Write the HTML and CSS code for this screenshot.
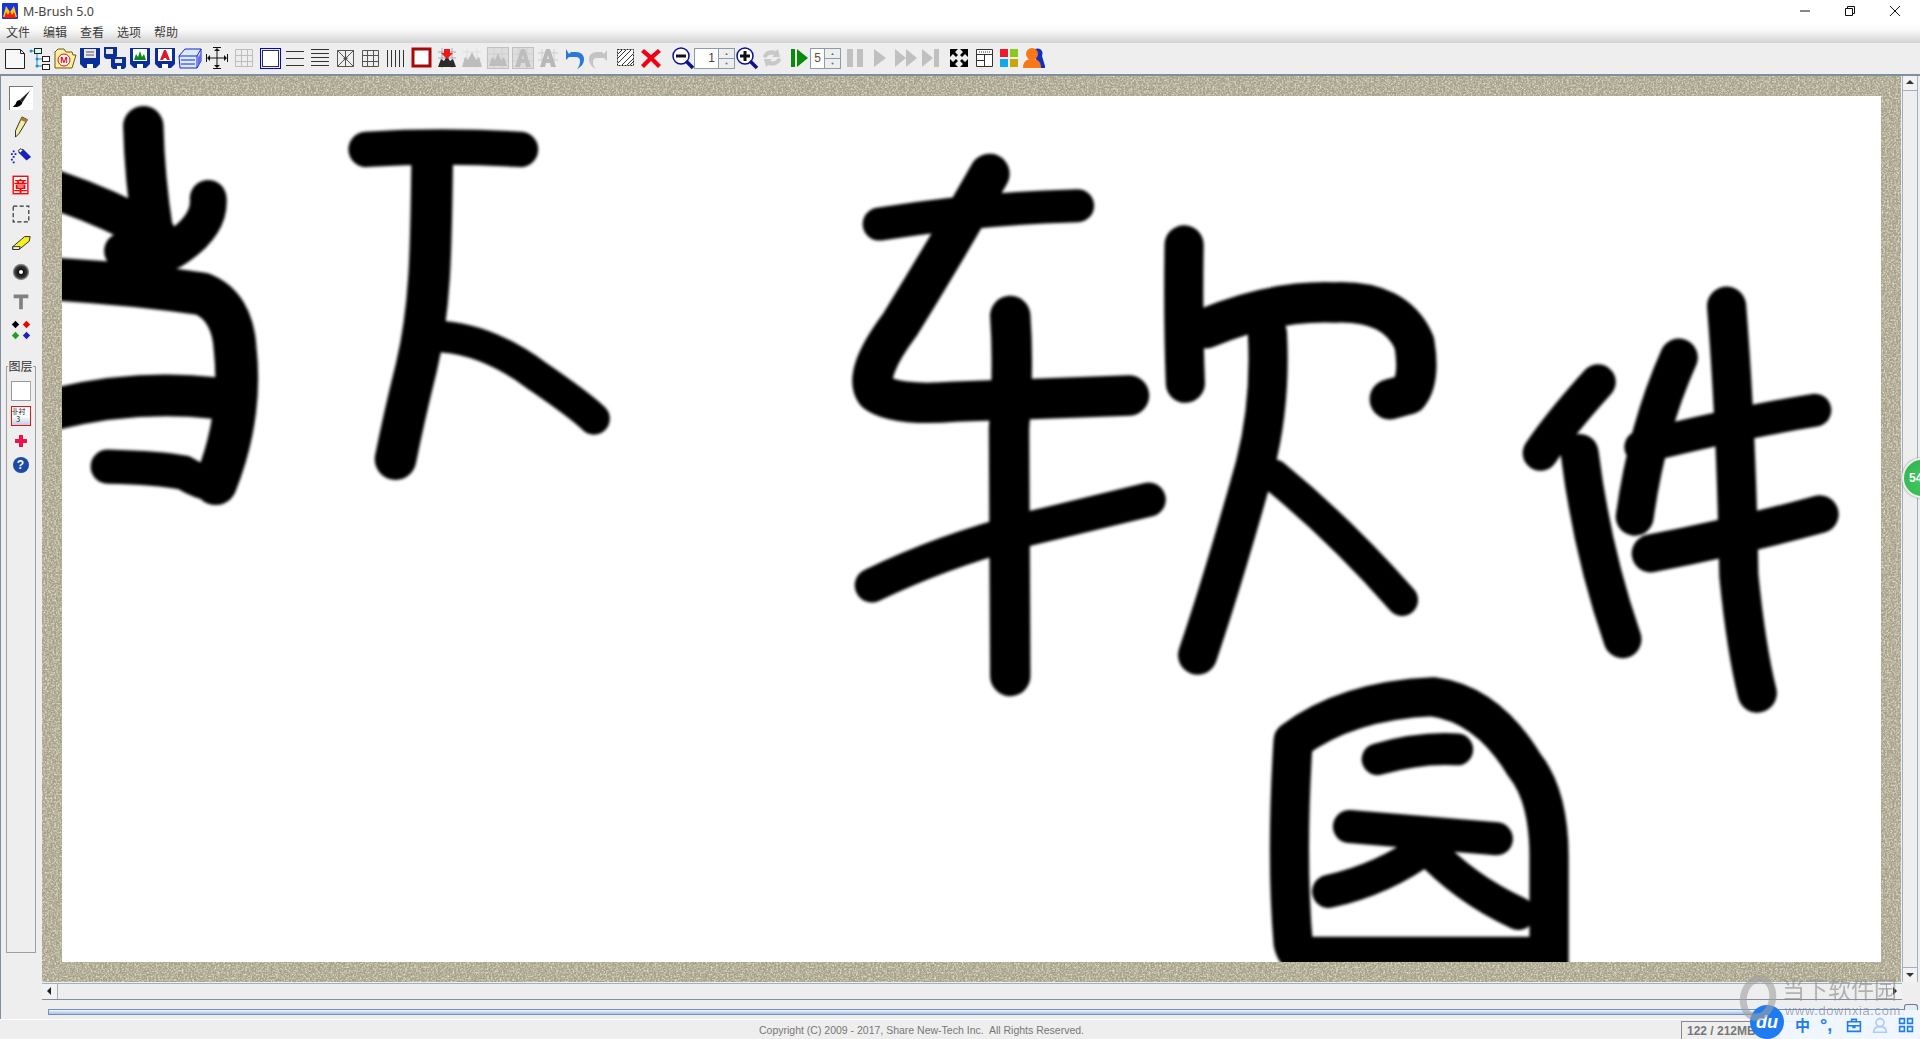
FILE: index.html
```html
<!DOCTYPE html>
<html lang="zh">
<head>
<meta charset="utf-8">
<title>M-Brush 5.0</title>
<link rel="stylesheet" href="styles.css">
</head>
<body>
<svg class="defs" width="0" height="0">
  <defs>
    <symbol id="disk" viewBox="0 0 24 24"><path d="M2 2h20v16l-4 4H6l-4-4z" fill="#0a2f96"/><rect x="9" y="18" width="6" height="4" fill="#fff"/></symbol>
    <radialGradient id="halo"><stop offset="0.25" stop-color="#111"/><stop offset="0.7" stop-color="#333"/><stop offset="1" stop-color="#aaa"/></radialGradient>
    <filter id="soft" x="-5%" y="-5%" width="110%" height="110%"><feGaussianBlur stdDeviation="1.1"/></filter>
    <filter id="grain" x="0" y="0" width="100%" height="100%">
      <feTurbulence type="fractalNoise" baseFrequency="0.55" numOctaves="2" seed="4"/>
      <feColorMatrix values="0 0 0 0 0.80  0 0 0 0 0.78  0 0 0 0 0.67  2.2 0 0 0 -0.90"/>
    </filter>
    <filter id="grain2" x="0" y="0" width="100%" height="100%">
      <feTurbulence type="fractalNoise" baseFrequency="0.6" numOctaves="2" seed="11"/>
      <feColorMatrix values="0 0 0 0 0.42  0 0 0 0 0.40  0 0 0 0 0.30  0 3 0 0 -1.20"/>
    </filter>
    <pattern id="ticks" width="20" height="20" patternUnits="userSpaceOnUse"><path d="M6 2v9M15 9v8" stroke="#d6d2bd" stroke-width="1" opacity=".45"/></pattern>
  </defs>
</svg>

<header class="titlebar">
  <svg class="app-logo" viewBox="0 0 16 16"><rect width="16" height="16" rx="1" fill="#1434e0"/><path d="M1 14L4 3l4 6 4-6 3 11z" fill="#f8cc10"/><path d="M2 15l2-6 2 3 2-4 2 4 2-3 2 6z" fill="#f02010"/></svg>
  <span class="app-name">M-Brush 5.0</span>
  <div class="winctl">
    <svg viewBox="0 0 12 12"><path d="M1 6h10" stroke="#111" fill="none"/></svg>
    <svg viewBox="0 0 12 12"><path d="M1.500 3.500h7v7h-7zM3.500 3.500v-2h7v7h-2" stroke="#111" fill="none"/></svg>
    <svg viewBox="0 0 12 12"><path d="M1 1l10 10M11 1L1 11" stroke="#111" fill="none"/></svg>
  </div>
</header>

<nav class="menubar"><span>文件</span><span>编辑</span><span>查看</span><span>选项</span><span>帮助</span></nav>

<div class="toolbar">
  <svg class="ti" viewBox="0 0 24 24"><path d="M2.500 3.500h15l4 4v15h-19z" fill="#f8f8f8" stroke="#222"/><path d="M17.500 3.500v4h4" fill="none" stroke="#222"/></svg>
  <svg class="ti" viewBox="0 0 24 24"><g fill="#fff" stroke="#222"><rect x="6.500" y="2.500" width="7" height="5" fill="#cfe"/><rect x="14.500" y="10.500" width="7" height="5"/><rect x="14.500" y="18.500" width="7" height="5"/></g><path d="M2 5h4M9 8v12M9 13h5M9 20h5" stroke="#1a90d8" fill="none"/><g fill="#1a90d8"><circle cx="3" cy="5" r="1.500"/><circle cx="9" cy="13" r="1.500"/><circle cx="9" cy="20" r="1.500"/></g></svg>
  <svg class="ti" viewBox="0 0 24 24"><path d="M2 22V6l3-3h6l2 3h6l1 3h3l-4 13z" fill="#fff0a0" stroke="#6a5a10"/><circle cx="11" cy="14" r="6" fill="#fff" stroke="#e01010"/><text class="ic-txt red" x="11" y="17">M</text></svg>
  <svg class="ti" viewBox="0 0 24 24"><use href="#disk"/><rect x="6" y="3" width="12" height="9" fill="#e8e8e8"/><path d="M8 6h8M8 9h8" stroke="#556"/></svg>
  <svg class="ti" viewBox="0 0 24 24"><path d="M1 1h13v9l-2 3H3l-2-2z" fill="#0a2f96"/><rect x="3" y="3" width="7" height="5" fill="#e8e8e8"/><path d="M8 11h15v10l-2 2H10l-2-2z" fill="#0a2f96"/><rect x="12" y="13" width="7" height="4" fill="#e8e8e8"/><rect x="14" y="20" width="4" height="3" fill="#fff"/></svg>
  <svg class="ti" viewBox="0 0 24 24"><use href="#disk"/><rect x="5" y="3" width="14" height="12" fill="#fff"/><path d="M6 14l2-6 2 3 2-6 2 6 2-3 2 6z" fill="#0a8a1a"/></svg>
  <svg class="ti" viewBox="0 0 24 24"><use href="#disk"/><rect x="5" y="3" width="14" height="12" fill="#fff"/><path d="M7 14l4-10h2l4 10h-3l-1-2h-2l-1 2z" fill="#e0182a"/></svg>
  <svg class="ti" viewBox="0 0 24 24"><path d="M1 10l6-7h16v12l-4 7H2z" fill="#dcecff" stroke="#1420e0"/><path d="M1 10h18v12M19 10l4-7M3 14h14M3 18h14" stroke="#1420e0" fill="none"/><path d="M20 11l3-4v8l-3 5z" fill="#6a70d8"/></svg>
  <svg class="ti m2" viewBox="0 0 24 24"><path d="M12 3v18M3 12h18" stroke="#111" fill="none"/><path d="M9 5h6l-3-3zM9 19h6l-3 3zM5 9v6l-3-3zM19 9v6l3-3z" fill="#111"/><path d="M1.500 8v8M22.500 8v8M8 1.500h8M8 22.500h8" stroke="#111"/></svg>
  <svg class="ti m2" viewBox="0 0 24 24"><path d="M3.500 3.500h17v17h-17zM3.500 9.500h17M3.500 15.500h17M9.500 3.500v17M15.500 3.500v17" fill="none" stroke="#bdbdbd"/></svg>
  <span class="sel"><svg viewBox="0 0 17 17"><rect x=".5" y=".5" width="16" height="16" fill="#fff" stroke="#333"/></svg></span>
  <svg class="ti m1" viewBox="0 0 24 24"><path d="M3 5.500h18M3 12.500h18M3 19.500h18" fill="none" stroke="#333"/></svg>
  <svg class="ti" viewBox="0 0 24 24"><path d="M3 3.500h18M3 7.500h18M3 11.500h18M3 15.500h18M3 19.500h18" fill="none" stroke="#333"/></svg>
  <svg class="ti" viewBox="0 0 24 24"><path d="M4.500 4.500h16v16h-16zM4.500 4.500l16 16M20.500 4.500l-16 16M12.500 4.500v16" fill="none" stroke="#555"/><circle cx="12.500" cy="12.500" r="2" fill="#555"/></svg>
  <svg class="ti" viewBox="0 0 24 24"><path d="M4.500 4.500h16v16h-16zM4.500 9.500h16M4.500 15.500h16M9.500 4.500v16M15.500 4.500v16" fill="none" stroke="#555"/></svg>
  <svg class="ti" viewBox="0 0 24 24"><path d="M4.500 4v17M8.500 4v17M12.500 4v17M16.500 4v17M20.500 4v17" fill="none" stroke="#333"/></svg>
  <svg class="ti m2" viewBox="0 0 24 24"><rect x="3" y="3" width="17" height="17" fill="#fff" stroke="#a80808" stroke-width="3"/></svg>
  <svg class="ti" viewBox="0 0 24 24"><path d="M3 6h18M3 12h18M7 2v20M17 2v20" stroke="#aaa" fill="none"/><path d="M3 21l3-8 3 2 3-5 3 5 3-2 3 8z" fill="#2a2a2a"/><path d="M9 3h6v4h3l-6 6-6-6h3z" fill="#f01818"/></svg>
  <svg class="ti" viewBox="0 0 24 24"><path d="M3 6h18M3 12h18M7 2v20M17 2v20" stroke="#ddd" fill="none"/><path d="M2 21l3-10 3 3 4-8 4 8 3-3 3 10z" fill="#bdbdbd"/></svg>
  <svg class="ti m1" viewBox="0 0 24 24"><rect x="1.500" y="1.500" width="21" height="21" fill="#ddd" stroke="#c0c0c0"/><path d="M2 8h20M2 15h20M8 2v20M16 2v20" stroke="#cfcfcf" fill="none"/><path d="M3 20l3-9 3 3 3-7 3 7 3-3 3 9z" fill="#bdbdbd"/></svg>
  <svg class="ti" viewBox="0 0 24 24"><rect x="1.500" y="1.500" width="21" height="21" fill="#ddd" stroke="#c0c0c0"/><path d="M2 8h20M2 15h20M8 2v20M16 2v20" stroke="#cfcfcf" fill="none"/><path fill-rule="evenodd" d="M4 21l6-18h4l6 18h-5l-1-4h-4l-1 4zM11 13h2l-1-4z" fill="#bdbdbd"/></svg>
  <svg class="ti" viewBox="0 0 24 24"><path d="M2 7h20M2 14h20M6 3v18M18 3v18" stroke="#ccc" fill="none"/><path fill-rule="evenodd" d="M4 21l6-18h4l6 18h-5l-1-4h-4l-1 4zM11 13h2l-1-4z" fill="#b8b8b8"/></svg>
  <svg class="ti m1" viewBox="0 0 24 24"><path d="M4 3v11l3-3h7c3 0 4 2 4 4 0 3-1 6-3 8 4-2 7-5 7-10 0-4-3-7-8-7H9L7 8z" fill="#2a78d8"/></svg>
  <svg class="ti" viewBox="0 0 24 24"><path d="M20 4v11l-3-3h-7c-3 0-4 2-4 4 0 3 1 5 3 7-4-2-7-5-7-10 0-4 3-7 8-7h5l2 2z" fill="#c4c4c4"/></svg>
  <svg class="ti m2" viewBox="0 0 24 24"><rect x="3.500" y="3.500" width="16" height="16" fill="#fff" stroke="#222" stroke-dasharray="2 1"/><path d="M4 12l8-8M4 17l13-13M8 19L19 8M13 19l6-6M4 8l4-4M16 19l3-3" stroke="#333" fill="none"/></svg>
  <svg class="ti" viewBox="0 0 24 24"><path d="M5 3l7 6 7-6 3 3-7 6 7 7-3 3-7-7-7 7-3-3 7-7-7-6z" fill="#f00010"/></svg>
  <svg class="ti m7" viewBox="0 0 24 24"><circle cx="10" cy="10" r="8" fill="#fff" stroke="#10108a" stroke-width="1.500"/><path d="M5 10h10" stroke="#111" stroke-width="3"/><path d="M15 15l7 7" stroke="#10108a" stroke-width="3.500"/></svg>
  <div class="spin"><span class="spin-val">1</span><span class="spin-btns"><i>▲</i><i>▼</i></span></div>
  <svg class="ti zoom-in" viewBox="0 0 24 24"><circle cx="10" cy="10" r="8" fill="#fff" stroke="#10108a" stroke-width="1.500"/><path d="M5 10h10M10 5v10" stroke="#111" stroke-width="3"/><path d="M15 15l7 7" stroke="#10108a" stroke-width="3.500"/></svg>
  <svg class="ti" viewBox="0 0 24 24"><path d="M3 11c1-5 6-8 13-6l2-2 2 8h-8l2-2c-4-1-6 0-8 3zM21 13c-1 5-6 8-13 6l-2 2-2-8h8l-2 2c4 1 6 0 8-3z" fill="#c8c8c8"/></svg>
  <svg class="ti m2" viewBox="0 0 24 24"><path d="M4 3h4v18H4zM10 3l11 9-11 9z" fill="#0a8a0a"/></svg>
  <div class="spin narrow"><span class="spin-val orange">5</span><span class="spin-btns"><i>▲</i><i>▼</i></span></div>
  <svg class="ti m2" viewBox="0 0 24 24"><path d="M3 3h6v18H3zM13 3h6v18h-6z" fill="#c0c0c0"/></svg>
  <svg class="ti" viewBox="0 0 24 24"><path d="M5 3l12 9-12 9z" fill="#c0c0c0"/></svg>
  <svg class="ti" viewBox="0 0 24 24"><path d="M1 3l11 9-11 9zM12 3l11 9-11 9z" fill="#c0c0c0"/></svg>
  <svg class="ti" viewBox="0 0 24 24"><path d="M3 3l11 9-11 9zM15 3h5v18h-5z" fill="#c0c0c0"/></svg>
  <svg class="ti m3" viewBox="0 0 24 24"><path d="M3 3h8l-3 3 3 3-2 2-3-3-3 3zM21 3h-8l3 3-3 3 2 2 3-3 3 3zM3 21h8l-3-3 3-3-2-2-3 3-3-3zM21 21h-8l3-3-3-3 2-2 3 3 3-3z" fill="#000"/></svg>
  <svg class="ti" viewBox="0 0 24 24"><path d="M4.500 3.500h16v17h-16zM4.500 8.500h16M12.500 8.500v12M4.500 14.500h8" fill="#fff" stroke="#333"/><path d="M7 6h11" stroke="#333" stroke-dasharray="1 1"/></svg>
  <svg class="ti" viewBox="0 0 24 24"><rect x="3" y="3" width="8" height="8" fill="#f01830"/><rect x="13" y="3" width="8" height="8" fill="#88c820"/><rect x="3" y="13" width="8" height="8" fill="#10a8f0"/><rect x="13" y="13" width="8" height="8" fill="#c8a808"/></svg>
  <svg class="ti" viewBox="0 0 24 24"><path d="M13 3c5-2 9 2 7 7l3 10v2h-6l-3-9z" fill="#1030c0"/><circle cx="10" cy="8" r="6" fill="#f87818"/><path d="M1 22c0-6 3-9 9-9s9 3 9 9z" fill="#f87818"/></svg>
</div>

<main class="workspace">
  <aside class="sidebar">
    <div class="tools">
      <span class="tool active"><svg viewBox="0 0 24 24"><path d="M22 2L10 13l3 3z" fill="#222"/><path d="M10 13c-4 0-4 4-5 5l-3 3c5 1 10-1 11-5z" fill="#000"/></svg></span>
      <span class="tool"><svg viewBox="0 0 24 24"><path d="M13 1l6 3-9 15-4 4 0-7z" fill="#f4eca0" stroke="#222"/><path d="M13 1l6 3-1 3-7-3z" fill="#a08030"/></svg></span>
      <span class="tool"><svg viewBox="0 0 24 24"><path d="M9 8l5-4 9 9-5 4z" fill="#1420c8"/><path d="M9 6l3-2 2 2-3 3z" fill="#fff" stroke="#222"/><path d="M3 7h3M1 10h3M3 13h3M1 16h3M3 19h3M5 10h2" stroke="#1420c8" stroke-width="2" stroke-dasharray="2 1"/></svg></span>
      <span class="tool"><svg viewBox="0 0 24 24"><rect x="3.500" y="2.500" width="16" height="19" fill="#fff" stroke="#f00" stroke-width="1.500"/><text class="ic-stamp" x="11.500" y="18">章</text></svg></span>
      <span class="tool"><svg viewBox="0 0 24 24"><rect x="3.500" y="3.500" width="17" height="17" fill="none" stroke="#333" stroke-width="1.300" stroke-dasharray="4.500 2.500"/></svg></span>
      <span class="tool"><svg viewBox="0 0 24 24"><path d="M3 16L16 5h6l-1 5-11 9H3z" fill="#f4f020" stroke="#222"/><path d="M3 16h8l-1 3H3z" fill="#fff" stroke="#222"/></svg></span>
      <span class="tool"><svg viewBox="0 0 24 24"><circle cx="12" cy="12" r="9" fill="url(#halo)"/><circle cx="12" cy="12" r="2.200" fill="#fff"/></svg></span>
      <span class="tool"><svg viewBox="0 0 24 24"><path d="M4 5h16v4h-6v12h-4V9H4z" fill="#808080"/></svg></span>
      <span class="tool"><svg viewBox="0 0 24 24"><path d="M6 2l4 4-4 4-4-4z" fill="#000"/><path d="M18 2l4 4-4 4-4-4z" fill="#f00000"/><path d="M6 14l4 4-4 4-4-4z" fill="#20a020"/><path d="M18 14l4 4-4 4-4-4z" fill="#2020c0"/></svg></span>
    </div>
    <fieldset class="layers">
      <legend>图层</legend>
      <span class="layer-blank"></span>
      <span class="layer-thumb">卝衬<br>&nbsp;&nbsp;&nbsp;3</span>
      <svg class="layer-ic" viewBox="0 0 16 16"><path d="M6 2h4v4h4v4h-4v4H6v-4H2V6h4z" fill="#f0104a"/></svg>
      <span class="help">?</span>
    </fieldset>
  </aside>

  <div class="board">
    <div class="board-top">
      <div class="frame">
        <svg class="texture" width="100%" height="100%"><rect width="100%" height="100%" fill="#a49e85"/><rect width="100%" height="100%" filter="url(#grain2)"/><rect width="100%" height="100%" filter="url(#grain)"/><rect width="100%" height="100%" fill="url(#ticks)"/></svg>
        <div class="paper">
          <svg class="ink" viewBox="50.600 78.400 1485.500 707.200" preserveAspectRatio="none">
            <g fill="none" stroke="#000" stroke-linecap="round" stroke-linejoin="round" filter="url(#soft)">
              <path d="M117 103Q118 145 125 190" stroke-width="33"/>
              <path d="M45 155Q90 170 128 192" stroke-width="32"/>
              <path d="M170 162Q172 185 140 205Q118 212 100 205" stroke-width="30"/>
              <path d="M45 228Q110 232 165 240Q190 250 192 285Q198 340 176 395" stroke-width="35"/>
              <path d="M45 334Q110 318 175 325" stroke-width="34"/>
              <path d="M88 381Q130 382 150 386Q165 395 176 396" stroke-width="28"/>
              <path d="M299 122Q360 118 425 122" stroke-width="29"/>
              <path d="M353 125C352 200 352 250 340 300Q330 340 323 375" stroke-width="34"/>
              <path d="M362 275Q400 278 440 308Q475 332 485 342" stroke-width="26"/>
              <path d="M718 183Q800 170 880 168" stroke-width="27"/>
              <path d="M808 142Q775 200 735 265Q705 305 715 320Q730 332 780 328L922 323" stroke-width="33"/>
              <path d="M825 258Q828 300 824 350L825 552" stroke-width="33"/>
              <path d="M712 478Q780 445 860 427L938 408" stroke-width="28"/>
              <path d="M967 200Q966 260 968 313" stroke-width="32"/>
              <path d="M985 268Q1040 245 1090 247Q1140 245 1155 280Q1160 310 1150 322L1135 326" stroke-width="33"/>
              <path d="M1035 272Q1038 330 1025 380Q1000 470 978 535" stroke-width="32"/>
              <path d="M1040 388Q1095 433 1145 490" stroke-width="26"/>
              <path d="M1305 312Q1275 345 1258 370" stroke-width="29"/>
              <path d="M1290 370Q1300 450 1325 522" stroke-width="31"/>
              <path d="M1371 292Q1345 350 1335 422" stroke-width="31"/>
              <path d="M1340 365Q1420 345 1482 335" stroke-width="27"/>
              <path d="M1348 452Q1420 438 1486 420" stroke-width="31"/>
              <path d="M1410 250Q1418 350 1420 470Q1426 530 1435 566" stroke-width="32"/>
              <path d="M1066 780Q1058 780 1056 770Q1050 700 1056 605Q1100 572 1170 569Q1215 575 1245 625Q1265 650 1265 700V790" stroke-width="32"/>
              <path d="M1070 776H1265" stroke-width="22"/>
              <path d="M1125 620Q1160 610 1190 612" stroke-width="26"/>
              <path d="M1102 675Q1160 680 1222 685" stroke-width="27"/>
              <path d="M1085 728Q1130 718 1165 692Q1195 725 1240 746" stroke-width="27"/>
            </g>
          </svg>
        </div>
      </div>
      <div class="vscroll"><span class="sbtn up"></span><span class="strack"></span><span class="sbtn down"></span></div>
    </div>
    <div class="hscroll"><span class="hbtn left"></span><span class="htrack"></span><span class="hbtn right"></span></div>
    <div class="progress-row"><div class="progress"></div><span class="progress-end"></span></div>
  </div>
</main>

<footer class="statusbar">
  <span class="copyright">Copyright (C) 2009 - 2017, Share New-Tech Inc.&nbsp; All Rights Reserved.</span>
  <span class="memory">122 / 212MB</span>
</footer>

<div class="badge">54</div>

<div class="ime">
  <span class="ime-du">du</span>
  <span class="ime-zh">中</span>
  <span class="ime-punc">°,</span>
  <svg viewBox="0 0 20 20"><path d="M2 6h16v12H2zM7 6V3h6v3M2 11h16M9 11v2h2v-2" fill="none" stroke="#1f7cf0" stroke-width="2"/></svg>
  <svg viewBox="0 0 20 20"><circle cx="10" cy="7" r="5" fill="none" stroke="#a9cbf6" stroke-width="2"/><path d="M2 19c0-5 3-7 8-7s8 2 8 7z" fill="none" stroke="#a9cbf6" stroke-width="2"/></svg>
  <svg viewBox="0 0 20 20"><path d="M2 2h6v6H2zM12 2h6v6h-6zM2 12h6v6H2zM12 12h6v6h-6z" fill="none" stroke="#1f7cf0" stroke-width="2"/></svg>
</div>

<div class="watermark">
  <span class="wm-ring"></span>
  <span class="wm-title">当下软件园</span>
  <span class="wm-url">www.downxia.com</span>
</div>
</body>
</html>
```

FILE: styles.css
```css
* { box-sizing: border-box; }
html, body { margin: 0; height: 100%; }
body {
  width: 1920px;
  height: 1039px;
  overflow: hidden;
  position: relative;
  background: #eeeeee;
  font-family: "Noto Sans", "Noto Sans CJK SC", sans-serif;
  color: #333;
  display: flex;
  flex-direction: column;
}
.defs { position: absolute; }

.titlebar {
  height: 22px;
  background: #fff;
  display: flex;
  align-items: center;
  padding-left: 2px;
  flex: none;
}
.app-logo { width: 16px; height: 16px; }
.app-name { margin-left: 5px; font-size: 12.5px; color: #444; }
.winctl { margin-left: auto; display: flex; gap: 33px; padding-right: 19px; }
.winctl svg { width: 12px; height: 12px; }

.menubar {
  height: 21px;
  flex: none;
  display: flex;
  gap: 13px;
  padding-left: 6px;
  align-items: flex-start;
  font-size: 12px;
  line-height: 20px;
  font-family: "Noto Sans CJK SC", sans-serif;
  color: #3a3a3a;
  background: linear-gradient(#ffffff 0, #fbfbfb 35%, #d2d2d2 100%);
}

.toolbar {
  height: 33px;
  flex: none;
  display: flex;
  align-items: center;
  gap: 1px;
  padding: 0 0 1px 3px;
  background: #eeeeee;
  border-bottom: 2px solid #7f8fa1;
}
.ti { width: 24px; height: 24px; flex: none; }
.ic-txt { font: bold 9px "Liberation Sans", sans-serif; text-anchor: middle; }
.ic-txt.red { fill: #e01010; }
.ic-stamp { font: bold 15px "Noto Sans CJK SC", sans-serif; text-anchor: middle; fill: #f00; }
.m1 { margin-left: 1px; }
.m2 { margin-left: 2px; }
.m3 { margin-left: 3px; }
.m7 { margin-left: 7px; }
.zoom-in { margin-left: -1px; }
.sel {
  width: 21px;
  height: 21px;
  margin-left: 3px;
  border: 1px solid #0000f0;
  padding: 1px;
  flex: none;
  display: flex;
}
.sel svg { width: 17px; height: 17px; }
.spin {
  width: 41px;
  height: 21px;
  margin-left: -2px;
  display: flex;
  flex: none;
  background: #fff;
  border: 1px solid #8b9cae;
  font-family: "Liberation Sans", sans-serif;
}
.spin.narrow { width: 31px; margin-left: -2px; }
.spin-val { flex: 1; text-align: right; padding-right: 3px; font-size: 12px; line-height: 19px; color: #444; }
.spin-val.orange { color: #6a4a30; }
.spin-btns { width: 16px; flex: none; display: flex; flex-direction: column; background: #eee; border-left: 1px solid #8b9cae; }
.spin-btns i { flex: 1; font-style: normal; font-size: 4px; line-height: 9px; text-align: center; color: #666; }
.spin-btns i + i { border-top: 1px solid #8b9cae; }

.workspace { height: 943px; flex: none; display: flex; }

.sidebar {
  width: 42px;
  flex: none;
  border-left: 1px solid #7f8fa1;
  border-right: 1px solid transparent;
  display: flex;
  flex-direction: column;
  align-items: center;
  padding: 10px 5px 0 4px;
}
.tools { display: flex; flex-direction: column; gap: 5px; align-items: center; }
.tool { width: 24px; height: 24px; display: flex; }
.tool svg { width: 22px; height: 22px; margin: 1px; }
.tool.active { background: #fff; border-top: 1px solid #777; border-left: 1px solid #777; }
.layers {
  width: 30px;
  height: 594px;
  margin: 17px 0 0;
  padding: 0;
  border: 1px solid #a0a0a0;
  display: flex;
  flex-direction: column;
  align-items: center;
  gap: 5px;
}
.layers legend { font-size: 12px; padding: 0; line-height: 14px; font-family: "Noto Sans CJK SC", sans-serif; margin: 0 auto; }
.layer-blank { width: 20px; height: 20px; margin-top: 8px; background: #fff; border: 1px solid #999; border-right-color: #aaa; flex: none; }
.layer-thumb {
  width: 20px;
  height: 20px;
  flex: none;
  overflow: hidden;
  border: 1px solid #f01010;
  background: linear-gradient(#fff 50%, #b8d0e8);
  font-size: 7px;
  line-height: 8px;
  color: #111;
  font-family: "Noto Sans CJK SC", sans-serif;
}
.layer-ic { width: 16px; height: 16px; margin-top: 2px; flex: none; }
.help {
  width: 16px;
  height: 16px;
  margin-top: 3px;
  flex: none;
  border-radius: 50%;
  background: #1c4aa8;
  color: #fff;
  font: bold 12px/16px "Liberation Sans", sans-serif;
  text-align: center;
}

.board { flex: 1; min-width: 0; display: flex; flex-direction: column; }
.board-top { height: 906px; display: flex; flex: none; }
.frame { width: 1859px; height: 906px; position: relative; padding: 20px; flex: none; overflow: hidden; }
.texture { position: absolute; inset: 0; }
.paper { position: relative; width: 1819px; height: 866px; background: #fff; overflow: hidden; }
.ink { display: block; width: 100%; height: 100%; }

.vscroll {
  width: 16px;
  margin-left: 1px;
  display: flex;
  flex-direction: column;
  border-left: 1px solid #9fb0c4;
  border-right: 1px solid #9fb0c4;
}
.strack { flex: 1; background: #eee; }
.sbtn { height: 15px; background: #f2f2f2; position: relative; flex: none; }
.sbtn::after { content: ""; position: absolute; left: 3px; border-left: 4px solid transparent; border-right: 4px solid transparent; }
.sbtn.up { border-bottom: 1px solid #9fb0c4; }
.sbtn.up::after { top: 4px; border-bottom: 4px solid #333; }
.sbtn.down { border-top: 1px solid #9fb0c4; }
.sbtn.down::after { top: 5px; border-top: 4px solid #333; }

.hscroll {
  height: 17px;
  width: 1860px;
  flex: none;
  display: flex;
  border-top: 1px solid #9fb0c4;
  border-bottom: 1px solid #7f8fa1;
  margin-top: 1px;
}
.htrack { flex: 1; background: #eee; }
.hbtn { width: 16px; position: relative; background: #f2f2f2; flex: none; }
.hbtn.left { border-right: 1px solid #9fb0c4; }
.hbtn.right { border-left: 1px solid #9fb0c4; }
.hbtn::after { content: ""; position: absolute; top: 3px; border-top: 4px solid transparent; border-bottom: 4px solid transparent; }
.hbtn.left::after { left: 5px; border-right: 4px solid #222; }
.hbtn.right::after { left: 6px; border-left: 4px solid #222; }

.progress-row { display: flex; padding: 9px 2px 0 6px; align-items: flex-start; }
.progress {
  flex: 1;
  height: 6px;
  border: 1px solid #6f8fca;
  background: linear-gradient(#f2f6fb, #a9c0dc);
}
.progress-end { width: 14px; height: 7px; margin-top: -5px; border: 1px solid #778; border-bottom: none; border-radius: 3px 3px 0 0; background: #e4ecf6; flex: none; }

.statusbar {
  flex: 1;
  position: relative;
  display: flex;
  border-top: 1px solid #fff;
}
.copyright {
  width: 1843px;
  text-align: center;
  font: 10.500px/20px "Liberation Sans", sans-serif;
  color: #777;
}
.memory {
  position: absolute;
  left: 1681px;
  top: 1px;
  width: 120px;
  height: 19px;
  padding-left: 5px;
  border: 1px solid #8a8a8a;
  border-bottom: none;
  border-right: none;
  font: bold 12px/18px "Liberation Sans", sans-serif;
  color: #777;
}

.badge {
  position: absolute;
  left: 1902px;
  top: 458px;
  width: 40px;
  height: 40px;
  border-radius: 50%;
  background: radial-gradient(circle at 50% 60%, #45c860, #2fb050);
  border: 2px solid #e6f2e8;
  box-shadow: 0 0 2px #666;
  color: #fff;
  font: bold 12px/36px "Liberation Sans", sans-serif;
  padding-left: 5px;
}

.watermark { position: absolute; left: 1740px; top: 975px; width: 180px; height: 50px; color: #8c8c8c; opacity: .6; }
.wm-ring { position: absolute; left: 0; top: 0; width: 36px; height: 46px; border: 7px solid #a0a0a0; border-radius: 50%; transform: rotate(12deg); }
.wm-title { position: absolute; left: 42px; top: 0; font: 23px/27px "Noto Sans CJK SC", sans-serif; color: #8a8a8a; }
.wm-url { position: absolute; left: 45px; top: 28px; font: 13px/16px "Liberation Sans", sans-serif; letter-spacing: .6px; color: #808080; white-space: nowrap; }

.ime {
  position: absolute;
  left: 1780px;
  top: 1010px;
  width: 140px;
  height: 29px;
  background: rgba(240, 246, 255, .92);
  display: flex;
  align-items: center;
  gap: 10px;
  padding-left: 15px;
}
.ime svg { width: 16px; height: 16px; flex: none; }
.ime-du {
  position: absolute;
  left: -30px;
  top: -5px;
  width: 34px;
  height: 34px;
  border-radius: 50%;
  background: #1f7cf0;
  color: #fff;
  text-align: center;
  font: italic bold 18px/34px "Liberation Sans", sans-serif;
}
.ime-zh { font: bold 15px/20px "Noto Sans CJK SC", sans-serif; color: #1f7cf0; }
.ime-punc { font: bold 18px/20px "Liberation Sans", sans-serif; color: #1f7cf0; width: 16px; }
```
